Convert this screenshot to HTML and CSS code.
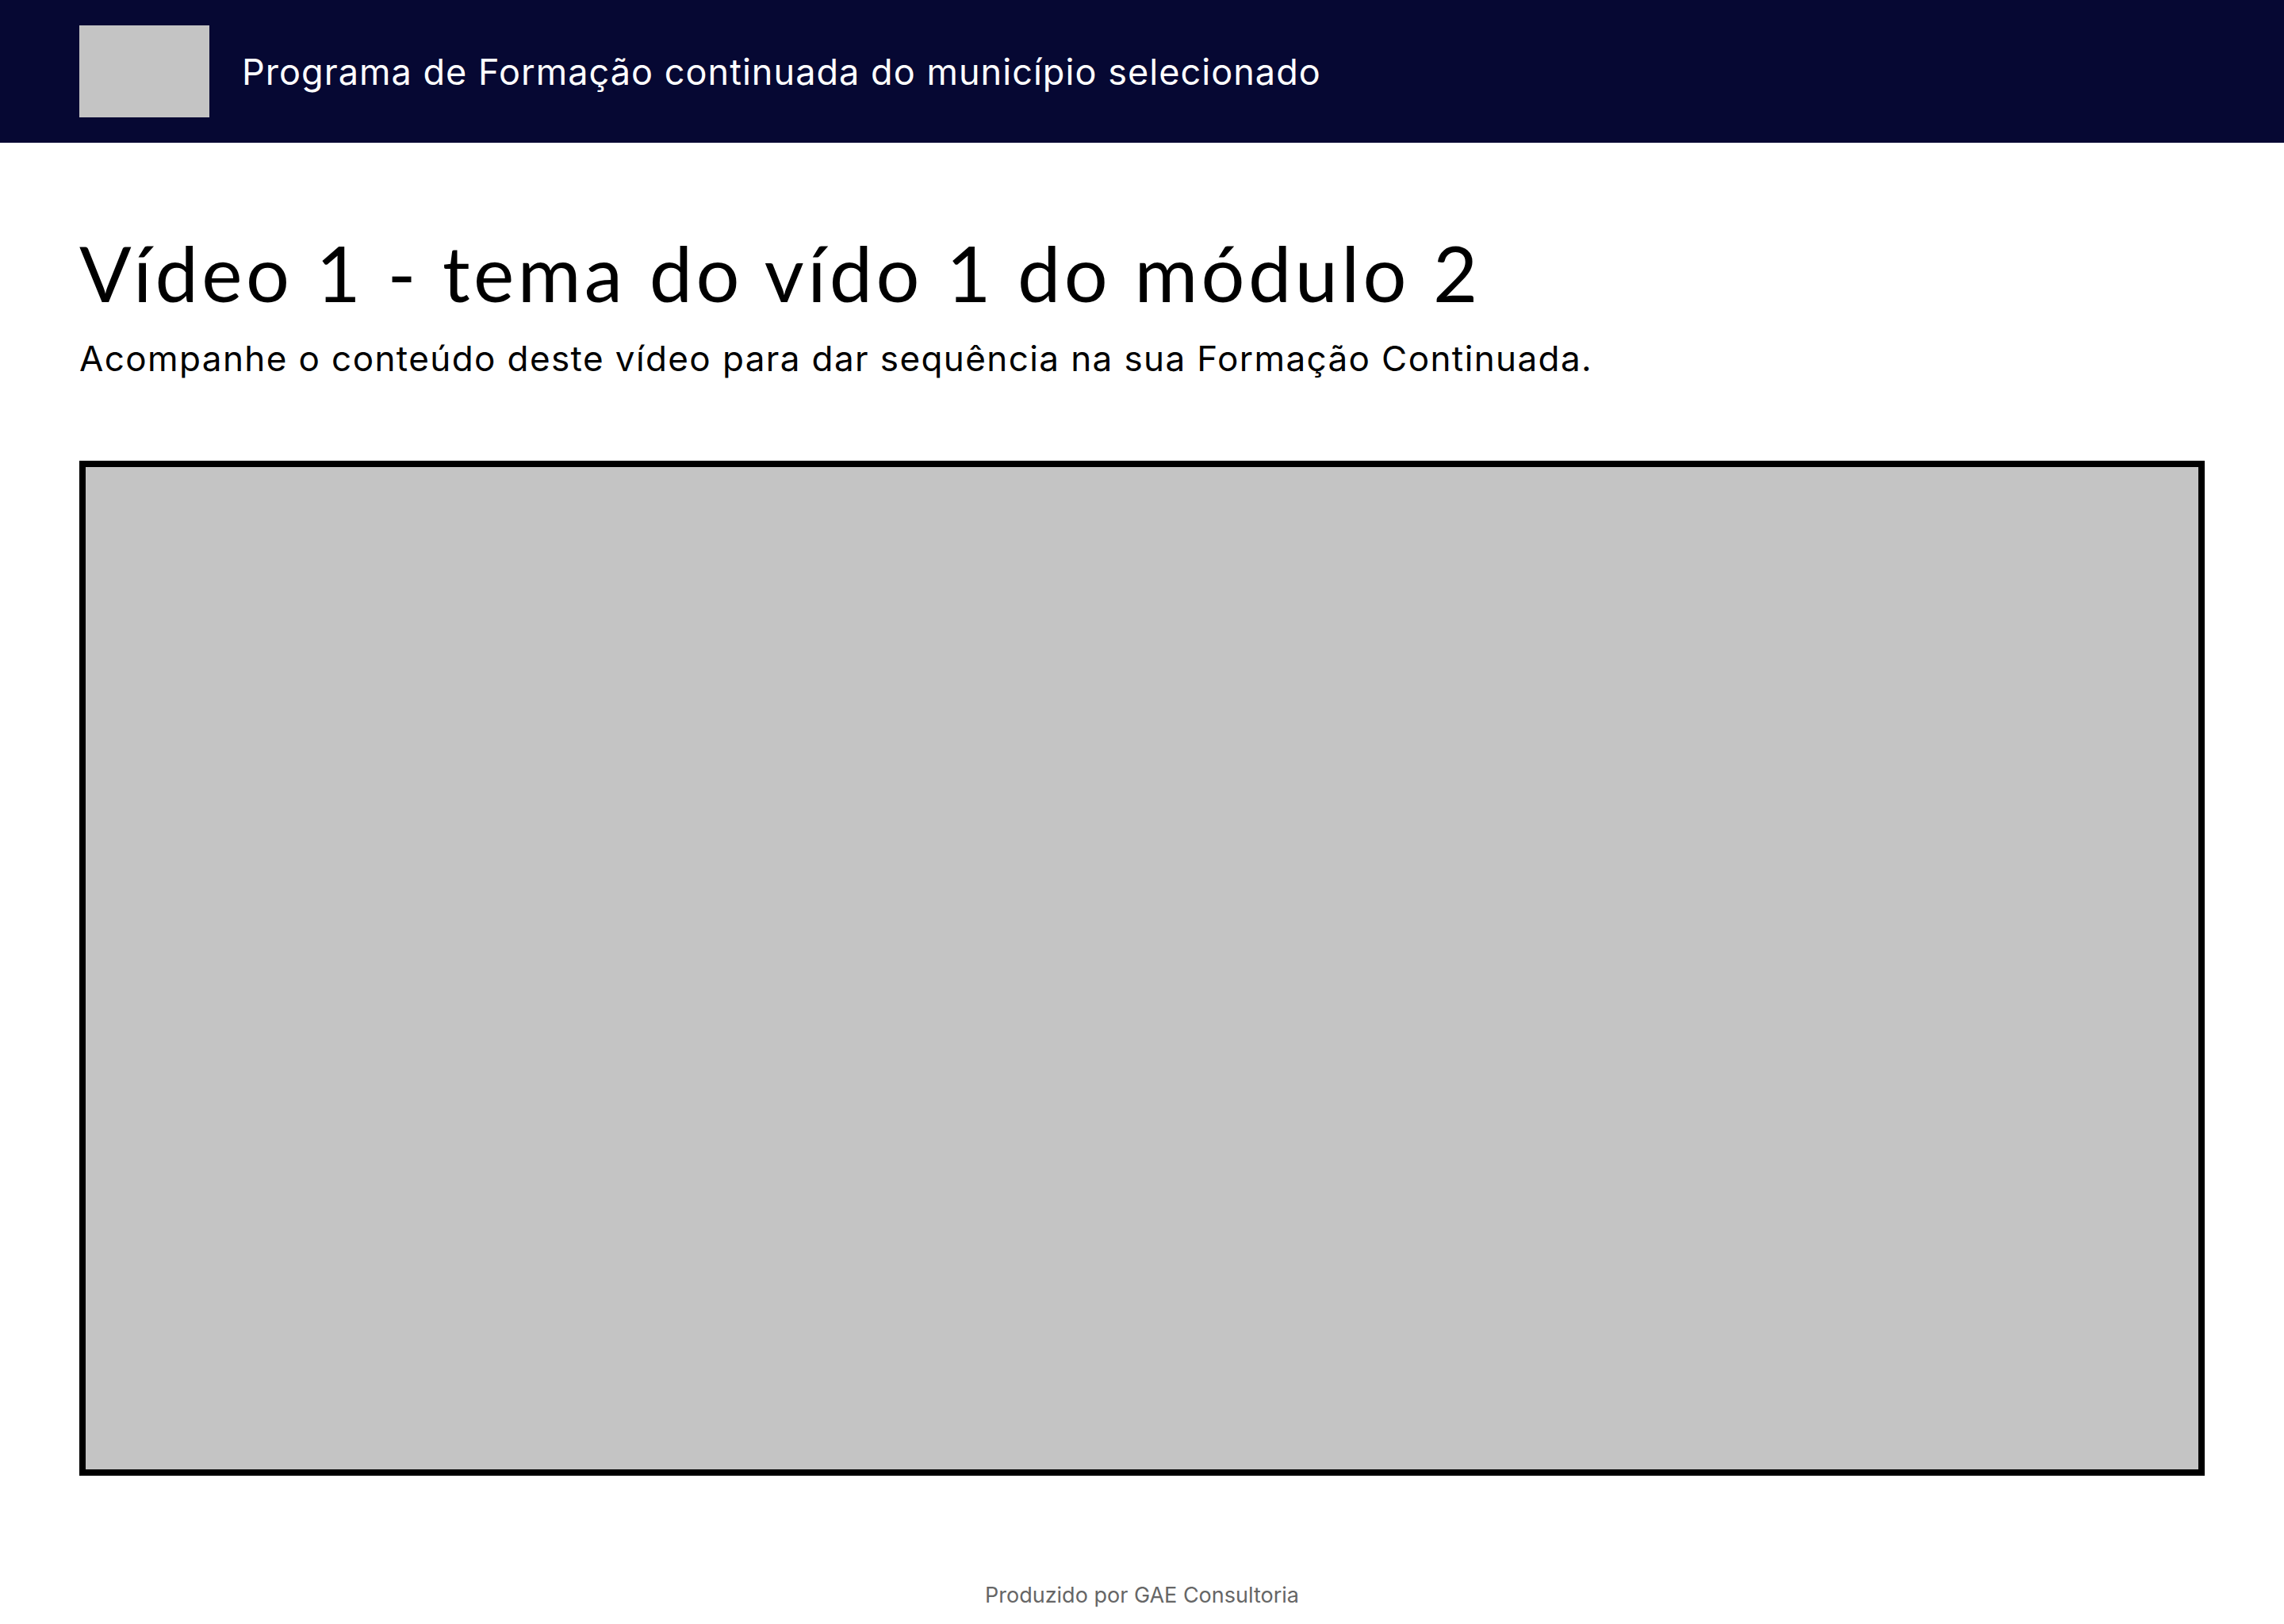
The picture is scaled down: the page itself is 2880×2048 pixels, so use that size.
FILE: index.html
```html
<!DOCTYPE html>
<html lang="pt-BR">
<head>
<meta charset="utf-8">
<title>Vídeo 1</title>
<link rel="stylesheet" href="styles.css">
</head>
<body>
<header class="topbar">
  <div class="logo"></div>
  <div class="program">Programa de Formação continuada do município selecionado</div>
</header>
<main class="content">
  <h1 class="title">Vídeo 1 - tema do vído 1 do módulo 2</h1>
  <p class="subtitle">Acompanhe o conteúdo deste vídeo para dar sequência na sua Formação Continuada.</p>
  <div class="video"></div>
</main>
<footer class="footer">Produzido por GAE Consultoria</footer>
</body>
</html>
```
FILE: styles.css
```css
html, body {
  margin: 0;
  padding: 0;
  background: #ffffff;
}
body {
  font-family: "Inter", "Roboto", sans-serif;
  color: #000;
}
.topbar {
  height: 180px;
  background: #060833;
  display: flex;
  align-items: center;
  padding: 0 100px;
  gap: 41px;
  box-sizing: border-box;
}
.logo {
  width: 164px;
  height: 116px;
  background: #c4c4c4;
  flex: none;
}
.program {
  color: #ffffff;
  font-size: 45px;
  letter-spacing: 1.05px;
  line-height: 1;
}
.content {
  padding: 0 100px;
}
.title {
  font-family: "Lato", "Noto Sans", sans-serif;
  font-weight: 400;
  font-size: 97px;
  letter-spacing: 4.4px;
  line-height: 116px;
  margin: 106px 0 0 0;
}
.subtitle {
  font-size: 44px;
  letter-spacing: 1.4px;
  line-height: 56px;
  margin: 22px 0 0 0;
}
.video {
  margin-top: 101px;
  height: 1280px;
  box-sizing: border-box;
  border: 8px solid #000;
  background: #c4c4c4;
}
.footer {
  text-align: center;
  color: #666666;
  font-size: 27px;
  margin-top: 134px;
}
```
